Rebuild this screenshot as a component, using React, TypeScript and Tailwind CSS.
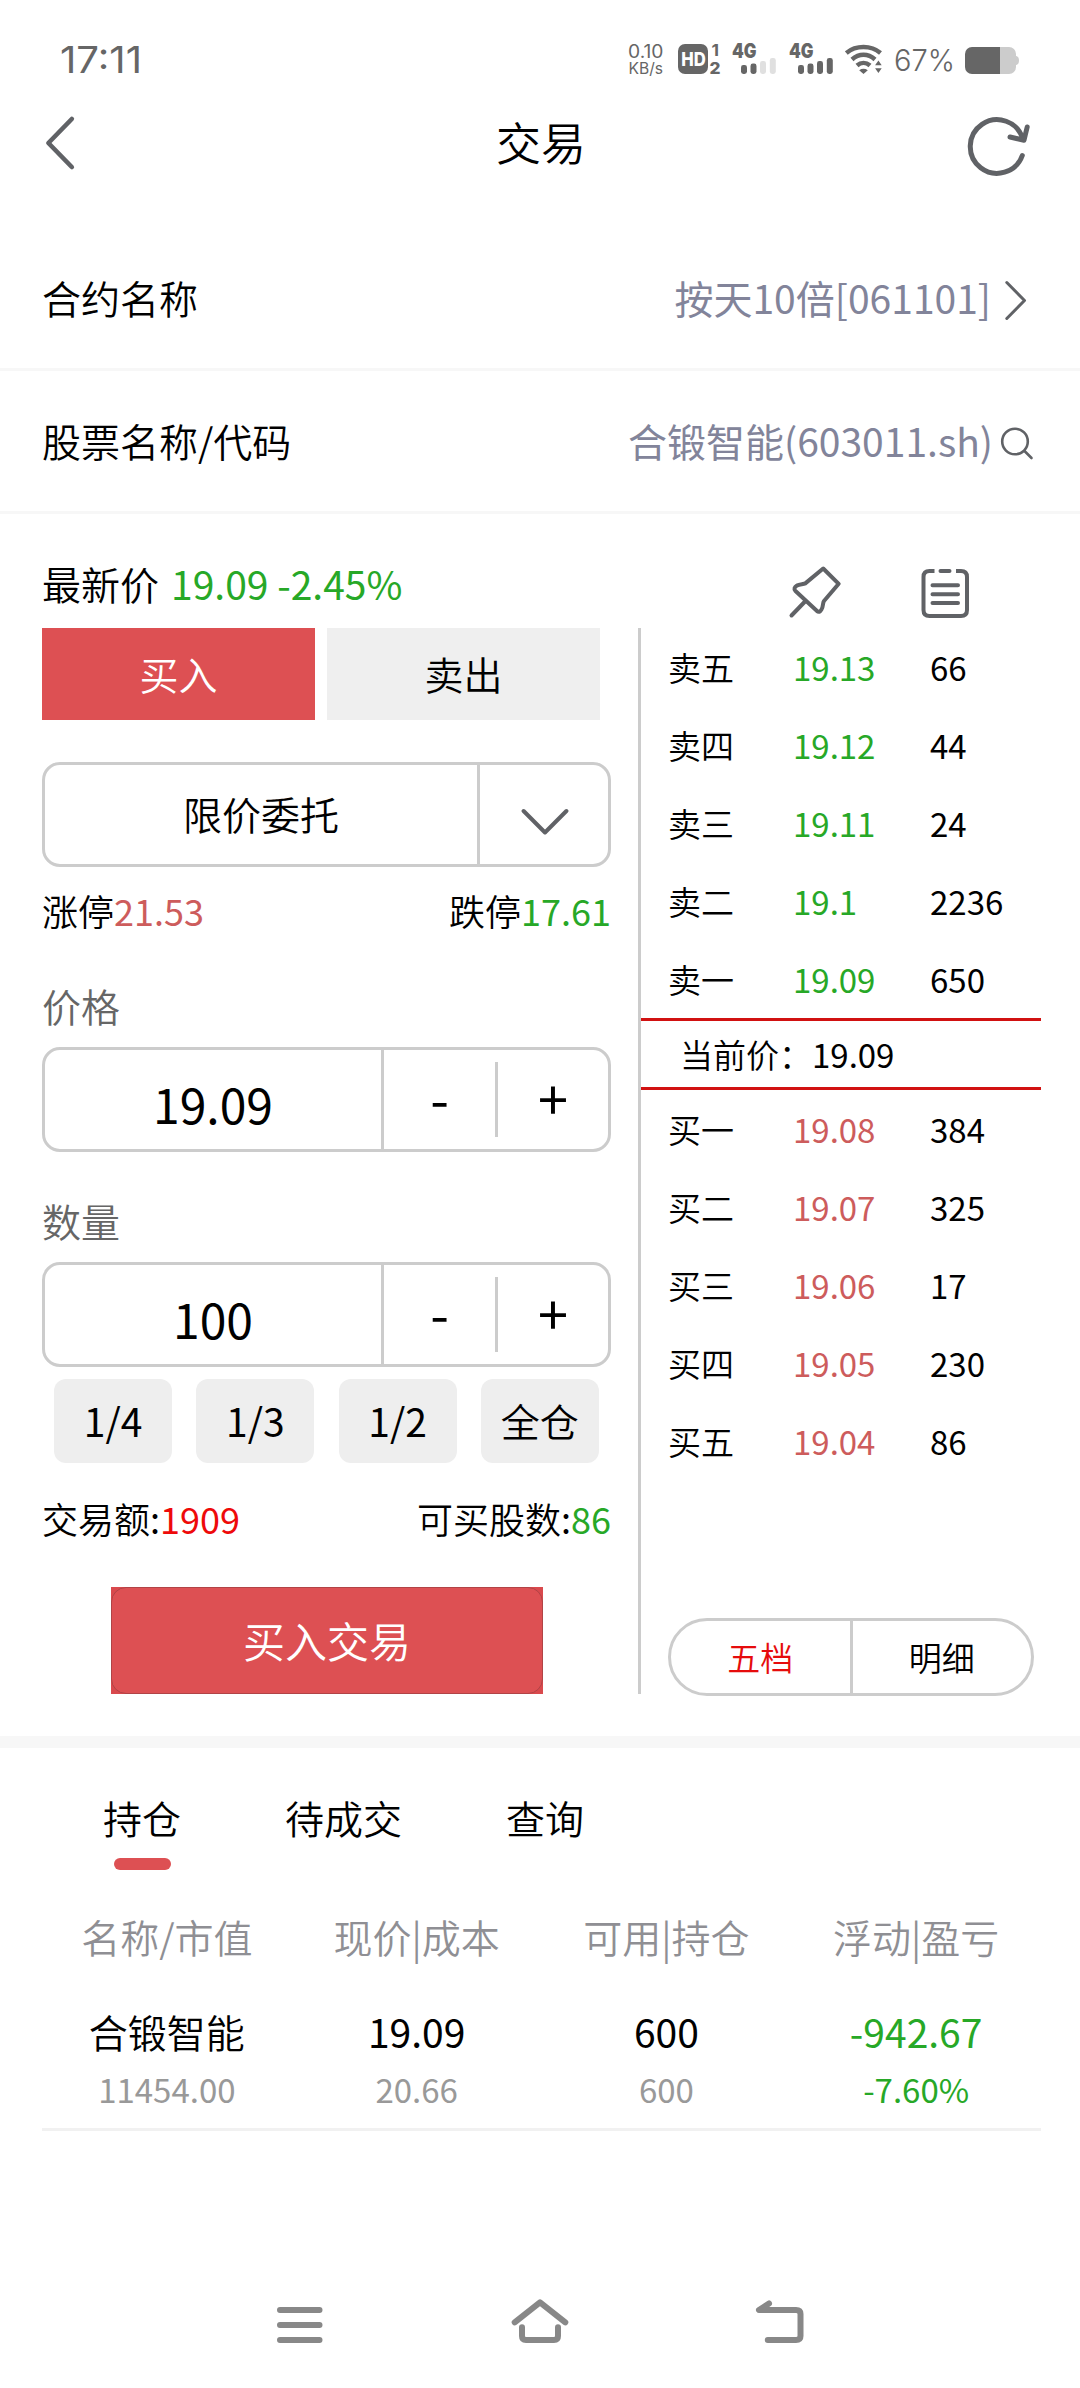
import React from "react";

const INK = "#606266";
const STATUS = "#666666";

const asks = [
  ["卖五", "19.13", "66"],
  ["卖四", "19.12", "44"],
  ["卖三", "19.11", "24"],
  ["卖二", "19.1", "2236"],
  ["卖一", "19.09", "650"],
];

const bids = [
  ["买一", "19.08", "384"],
  ["买二", "19.07", "325"],
  ["买三", "19.06", "17"],
  ["买四", "19.05", "230"],
  ["买五", "19.04", "86"],
];

function Signal({ full }: { full: boolean }) {
  const dim = full ? STATUS : "#e0e0e0";
  return (
    <svg className="overflow-visible" width="46" height="30" viewBox="0 0 46 30" fill={STATUS}>
      <text x="0" y="14.3" fontSize="19.5" fontWeight="900" fontFamily="Inter" textLength="24.5" lengthAdjust="spacingAndGlyphs">4G</text>
      <rect x="9" y="21" width="6" height="9" rx="2.4" />
      <rect x="18.5" y="19.5" width="6" height="10.5" rx="2.4" />
      <rect x="28" y="17" width="6" height="13" rx="2.4" fill={dim} />
      <rect x="37.8" y="14" width="6" height="16" rx="2.4" fill={dim} />
    </svg>
  );
}

function StatusBar() {
  return (
    <div className="flex h-[84px] items-start justify-between pt-[44px] pr-[60px] pl-[60px]">
      <svg className="overflow-visible" width="82" height="30" viewBox="0 0 82 30" fill={STATUS}>
        <text x="0" y="28.5" fontSize="37" fontWeight="400" fontFamily="Inter" textLength="82" lengthAdjust="spacingAndGlyphs">17:11</text>
      </svg>
      <div className="flex items-start">
        <svg className="mr-[14px] overflow-visible" width="36" height="30" viewBox="0 0 36 30" fill={STATUS} fontFamily="Inter" fontWeight="400">
          <text x="0" y="14" fontSize="18" textLength="35.5" lengthAdjust="spacingAndGlyphs">0.10</text>
          <text x="0.5" y="29.5" fontSize="16" textLength="34.5" lengthAdjust="spacingAndGlyphs">KB/s</text>
        </svg>
        <svg className="mr-[11px] overflow-visible" width="43" height="30" viewBox="0 0 43 30" fill={STATUS} fontFamily="Inter" fontWeight="800">
          <rect width="30" height="30" rx="7" />
          <text x="3.2" y="21.9" fontSize="19" fill="#fff" textLength="24.500" lengthAdjust="spacingAndGlyphs">HD</text>
          <text x="33.4" y="12" fontSize="16.5" fontWeight="700" textLength="7.5" lengthAdjust="spacingAndGlyphs">1</text>
          <text x="31.5" y="29.5" fontSize="16.5" textLength="11" lengthAdjust="spacingAndGlyphs">2</text>
        </svg>
        <div className="mr-[11px]"><Signal full={false} /></div>
        <div className="mr-[10px]"><Signal full /></div>
        <svg className="mr-[11px]" width="38" height="30" viewBox="0 0 38 30" fill="none" stroke={STATUS} strokeWidth="4.500">
          <path d="M1.3 9C11 1 26 1 35.5 9" />
          <path d="M7 15.5C14 9.2 23 9.2 30 15.5" />
          <path d="M12 21.5C16 18 21 18 25 21.5" />
          <path d="M14.2 26.2C17 24.4 20 24.4 22.8 26.2L18.5 30Z" fill={STATUS} stroke="none" />
          <path d="M33.4 16.5L36.7 21.2H30.1ZM33.4 29L36.7 24.3H30.1Z" fill={STATUS} stroke="none" />
        </svg>
        <svg className="mr-[10px] overflow-visible" width="61" height="30" viewBox="0 0 61 30" fill={STATUS}>
          <text x="0" y="27" fontSize="30" fontWeight="300" fontFamily="Inter" textLength="61" lengthAdjust="spacingAndGlyphs">67%</text>
        </svg>
        <svg width="55" height="30" viewBox="0 0 55 30">
          <path d="M35 3h9a7 7 0 0 1 7 7v2q3 .3 3 4.500t-3 4.500v2a7 7 0 0 1-7 7h-9z" fill="#cccccc" />
          <path d="M35 3H7a7 7 0 0 0-7 7v13a7 7 0 0 0 7 7h28z" fill={STATUS} />
        </svg>
      </div>
    </div>
  );
}

function Header() {
  return (
    <div className="flex h-[114px] items-center justify-between pr-[50px] pl-[44px]">
      <svg className="mt-1" width="64" height="56" viewBox="0 0 64 56" fill="none" stroke={INK} strokeWidth="4.600" strokeLinecap="round" strokeLinejoin="round">
        <path d="M27.800 4L4.400 28L27.800 52" />
      </svg>
      <h1 className="pt-[1px] pl-[8px] text-[45px] leading-[64px] font-[350] text-black">交易</h1>
      <svg className="mt-[11px]" width="64" height="64" viewBox="0 0 64 64" fill="none" stroke={INK} strokeWidth="5" strokeLinecap="round" strokeLinejoin="round">
        <path d="M56.300 40.500A26.800 26.800 0 1 1 56.800 24" />
        <path d="M44 22L58 25.200L61.200 12" />
      </svg>
    </div>
  );
}

function Stepper({ label, value, className }: { label: string; value: string; className: string }) {
  return (
    <div className={className}>
      <div className="h-[60px] text-[39px] leading-[58px] text-[#666]">{label}</div>
      <div className="mt-[11px] flex h-[105px] items-stretch rounded-[18px] border-[3px] border-[#ccc] font-normal">
        <div className="flex w-[336px] items-center justify-center pt-[6px] text-[48px] leading-[70px]">{value}</div>
        <div className="w-[3px] bg-[#ccc]" />
        <div className="flex flex-1 items-center justify-center pb-[6px] text-[54px] leading-[70px]">-</div>
        <div className="my-[12px] w-[3px] bg-[#ccc]" />
        <div className="flex w-[110px] items-center justify-center pb-[6px] text-[54px] leading-[70px]">+</div>
      </div>
    </div>
  );
}

function Level({ row, tone }: { row: string[]; tone: string }) {
  return (
    <div className="flex h-[78px] items-center pl-[27px] text-[33px] leading-[48px] font-normal">
      <span className="w-[125px] font-[350]">{row[0]}</span>
      <span className={`w-[137px] ${tone}`}>{row[1]}</span>
      <span>{row[2]}</span>
    </div>
  );
}

function OrderForm() {
  return (
    <div className="w-[569px]">
      <div className="grid h-[92px] w-[558px] grid-cols-2 gap-3 text-[39px] leading-[56px]">
        <button className="bg-[#dd5053] pb-[3px] text-white">买入</button>
        <button className="bg-[#efefef] pb-[3px]">卖出</button>
      </div>
      <div className="mt-[42px] flex h-[105px] rounded-[18px] border-[3px] border-[#ccc]">
        <div className="flex w-[432px] items-center justify-center pb-[4px] text-[39px] leading-[58px]">限价委托</div>
        <div className="w-[3px] bg-[#ccc]" />
        <div className="flex flex-1 items-center justify-center pt-[14px]">
          <svg className="ml-[1px]" width="48" height="28" viewBox="0 0 48 28" fill="none" stroke={INK} strokeWidth="4" strokeLinecap="round" strokeLinejoin="round">
            <path d="M2.600 3L24 24.500L45.400 3" />
          </svg>
        </div>
      </div>
      <div className="mt-[17px] flex h-[54px] justify-between text-[36px] leading-[53px]">
        <span>涨停<span className="font-normal text-[#cd5c5c]">21.53</span></span>
        <span>跌停<span className="font-normal text-[#27a827]">17.61</span></span>
      </div>
      <Stepper label="价格" value="19.09" className="mt-[38px]" />
      <Stepper label="数量" value="100" className="mt-[39px]" />
      <div className="mt-3 flex justify-around text-[39px]">
        {["1/4", "1/3", "1/2"].map((t) => (
          <button key={t} className="h-[84px] w-[118px] rounded-[12px] bg-[#eee] pb-[3px] leading-[58px] font-normal">{t}</button>
        ))}
        <button className="h-[84px] w-[118px] rounded-[12px] bg-[#eee] pb-[3px] leading-[58px]">全仓</button>
      </div>
      <div className="mt-[28px] flex h-[54px] justify-between text-[36px] leading-[54px]">
        <span>交易额<span className="font-normal">:<span className="text-[#ee0a0a]">1909</span></span></span>
        <span>可买股数<span className="font-normal">:<span className="text-[#27a827]">86</span></span></span>
      </div>
      <div className="mt-[42px] ml-[69px] h-[107px] w-[432px] bg-[#d9494d]">
        <button className="flex h-full w-full items-center justify-center rounded-[15px] border border-[#b14346] bg-[#dd5053] pb-[2px] text-[42px] leading-[60px] text-white">
          买入交易
        </button>
      </div>
    </div>
  );
}

function OrderBook() {
  return (
    <div className="w-[400px]">
      {asks.map((r) => <Level key={r[0]} row={r} tone="text-[#27a827]" />)}
      <div className="h-[72px] w-[400px] border-y-[3px] border-[#d11111] pl-[39px] text-[33px] leading-[66px]">
        当前价：<span className="font-normal">19.09</span>
      </div>
      {bids.map((r) => <Level key={r[0]} row={r} tone="text-[#cd5c5c]" />)}
      <div className="mt-[138px] ml-[27px] flex h-[78px] w-[366px] rounded-full border-[3px] border-[#ccc] text-[33px] leading-[72px]">
        <div className="flex-1 text-center text-[#e60c0c]">五档</div>
        <div className="w-[3px] bg-[#ccc]" />
        <div className="flex-1 text-center">明细</div>
      </div>
    </div>
  );
}

function Positions() {
  return (
    <div>
      <div className="flex h-[134px] gap-[104px] pt-[39px] pl-[103px] text-[39px] leading-[60px]">
        <div className="flex flex-col items-center">
          持仓
          <div className="mt-[11px] h-3 w-[57px] rounded-full bg-[#dd5053]" />
        </div>
        <div>待成交</div>
        <div>查询</div>
      </div>
      <div className="mx-[42px] h-[249px] w-[999px] border-b-[3px] border-[#f1f1f1] pt-[24px] text-center">
        <div className="grid grid-cols-4 text-[39px] leading-[60px] text-[#8f8f94]">
          <span>名称/市值</span>
          <span>现价|成本</span>
          <span>可用|持仓</span>
          <span>浮动|盈亏</span>
        </div>
        <div className="mt-[35px] grid grid-cols-4 text-[39px] leading-[60px] font-normal">
          <span className="font-[350]">合锻智能</span>
          <span>19.09</span>
          <span>600</span>
          <span className="text-[#27a827]">-942.67</span>
        </div>
        <div className="mt-[3px] grid grid-cols-4 text-[33px] leading-[50px] font-normal text-[#999]">
          <span>11454.00</span>
          <span>20.66</span>
          <span>600</span>
          <span className="text-[#27a827]">-7.60%</span>
        </div>
      </div>
    </div>
  );
}

export default function App() {
  return (
    <div lang="zh-CN" className="h-[2388px] w-[1080px] overflow-hidden bg-white font-['Noto_Sans_CJK_SC',sans-serif] font-[350] text-black">
      <StatusBar />
      <Header />

      <div className="mt-[30px] flex h-[143px] items-center justify-between border-b-[3px] border-[#f7f7f7] pr-[53px] pb-[2px] pl-[42px] text-[39px] leading-[58px]">
        <span>合约名称</span>
        <div className="flex items-center font-normal text-[#82849a]">
          按天10倍[061101]
          <svg className="mt-[6px] ml-[12px]" width="24" height="42" viewBox="0 0 24 42" fill="none" stroke={INK} strokeWidth="3" strokeLinecap="round" strokeLinejoin="round">
            <path d="M3.800 3.500L21.500 21.500L3.800 39.500" />
          </svg>
        </div>
      </div>
      <div className="flex h-[143px] items-center justify-between border-b-[3px] border-[#f7f7f7] pr-[46px] pb-[2px] pl-[42px] text-[39px] leading-[58px]">
        <span>股票名称/代码</span>
        <div className="flex items-center font-normal text-[#82849a]">
          合锻智能(603011.sh)
          <svg className="mt-[6px] ml-[7px]" width="34" height="34" viewBox="0 0 34 34" fill="none" stroke={INK} strokeWidth="2.600" strokeLinecap="round">
            <circle cx="15" cy="15.500" r="12.800" />
            <path d="M24.500 25L31.500 32" />
          </svg>
        </div>
      </div>

      <div className="flex h-[114px] items-start justify-between pt-[40px] pr-[110px] pl-[42px]">
        <div className="text-[39px] leading-[58px]">
          最新价<span className="ml-3 font-normal text-[#27a827]">19.09 -2.45%</span>
        </div>
        <div className="mt-[10px] flex items-start gap-[78px]">
          <svg width="54" height="56" viewBox="0 0 54 56" fill="none" stroke={INK} strokeWidth="4" strokeLinecap="round" strokeLinejoin="round">
            <path d="M35.200 4.500L50.700 19.800L36 37C34.500 39 35.500 42.500 33.500 45.500C32 48 30.500 48.500 29 47L7.500 27C5.500 25 6.500 23 9 21.500C11.500 19.800 15 20.500 17.300 19.400Z" />
            <path d="M17.500 37L3.500 51.500" />
          </svg>
          <svg width="50" height="56" viewBox="0 0 50 56" fill="none" stroke={INK} strokeWidth="4" strokeLinecap="round">
            <path d="M14.500 7H9.500Q3.500 7 3.500 13V46Q3.500 52 9.500 52H41Q47 52 47 46V13Q47 7 41 7H36" strokeLinecap="butt" />
            <path d="M20.500 7H29.500M12.500 21.300H38M12.500 30.200H38M12.500 39H38" />
          </svg>
        </div>
      </div>

      <div className="flex h-[1108px] items-start pl-[42px]">
        <OrderForm />
        <div className="ml-[27px] h-[1066px] w-[3px] bg-[#ccc]" />
        <OrderBook />
      </div>

      <div className="h-3 bg-[#f7f7f7]" />
      <Positions />

      <div className="flex justify-between px-[272px] pt-[165px]">
        <svg width="56" height="56" viewBox="0 0 56 56" stroke="#888" strokeWidth="6" strokeLinecap="round">
          <path d="M8 14H47.500M8 29H47.500M8 44H47.500" />
        </svg>
        <svg width="62" height="56" viewBox="0 0 62 56" fill="none" stroke="#888" strokeWidth="6" strokeLinecap="round" strokeLinejoin="round">
          <path d="M5.700 26.300L31 6.300L56.300 26.300" />
          <path d="M13 31.300V40Q13 44 17 44H45Q49 44 49 40V31.300" />
        </svg>
        <svg width="56" height="56" viewBox="0 0 56 56" fill="none" stroke="#888" strokeWidth="6" strokeLinecap="round" strokeLinejoin="round">
          <path d="M17 7.500L7 14H44Q48.500 14 48.500 18V40Q48.500 44 44 44H15.800" />
        </svg>
      </div>
    </div>
  );
}
